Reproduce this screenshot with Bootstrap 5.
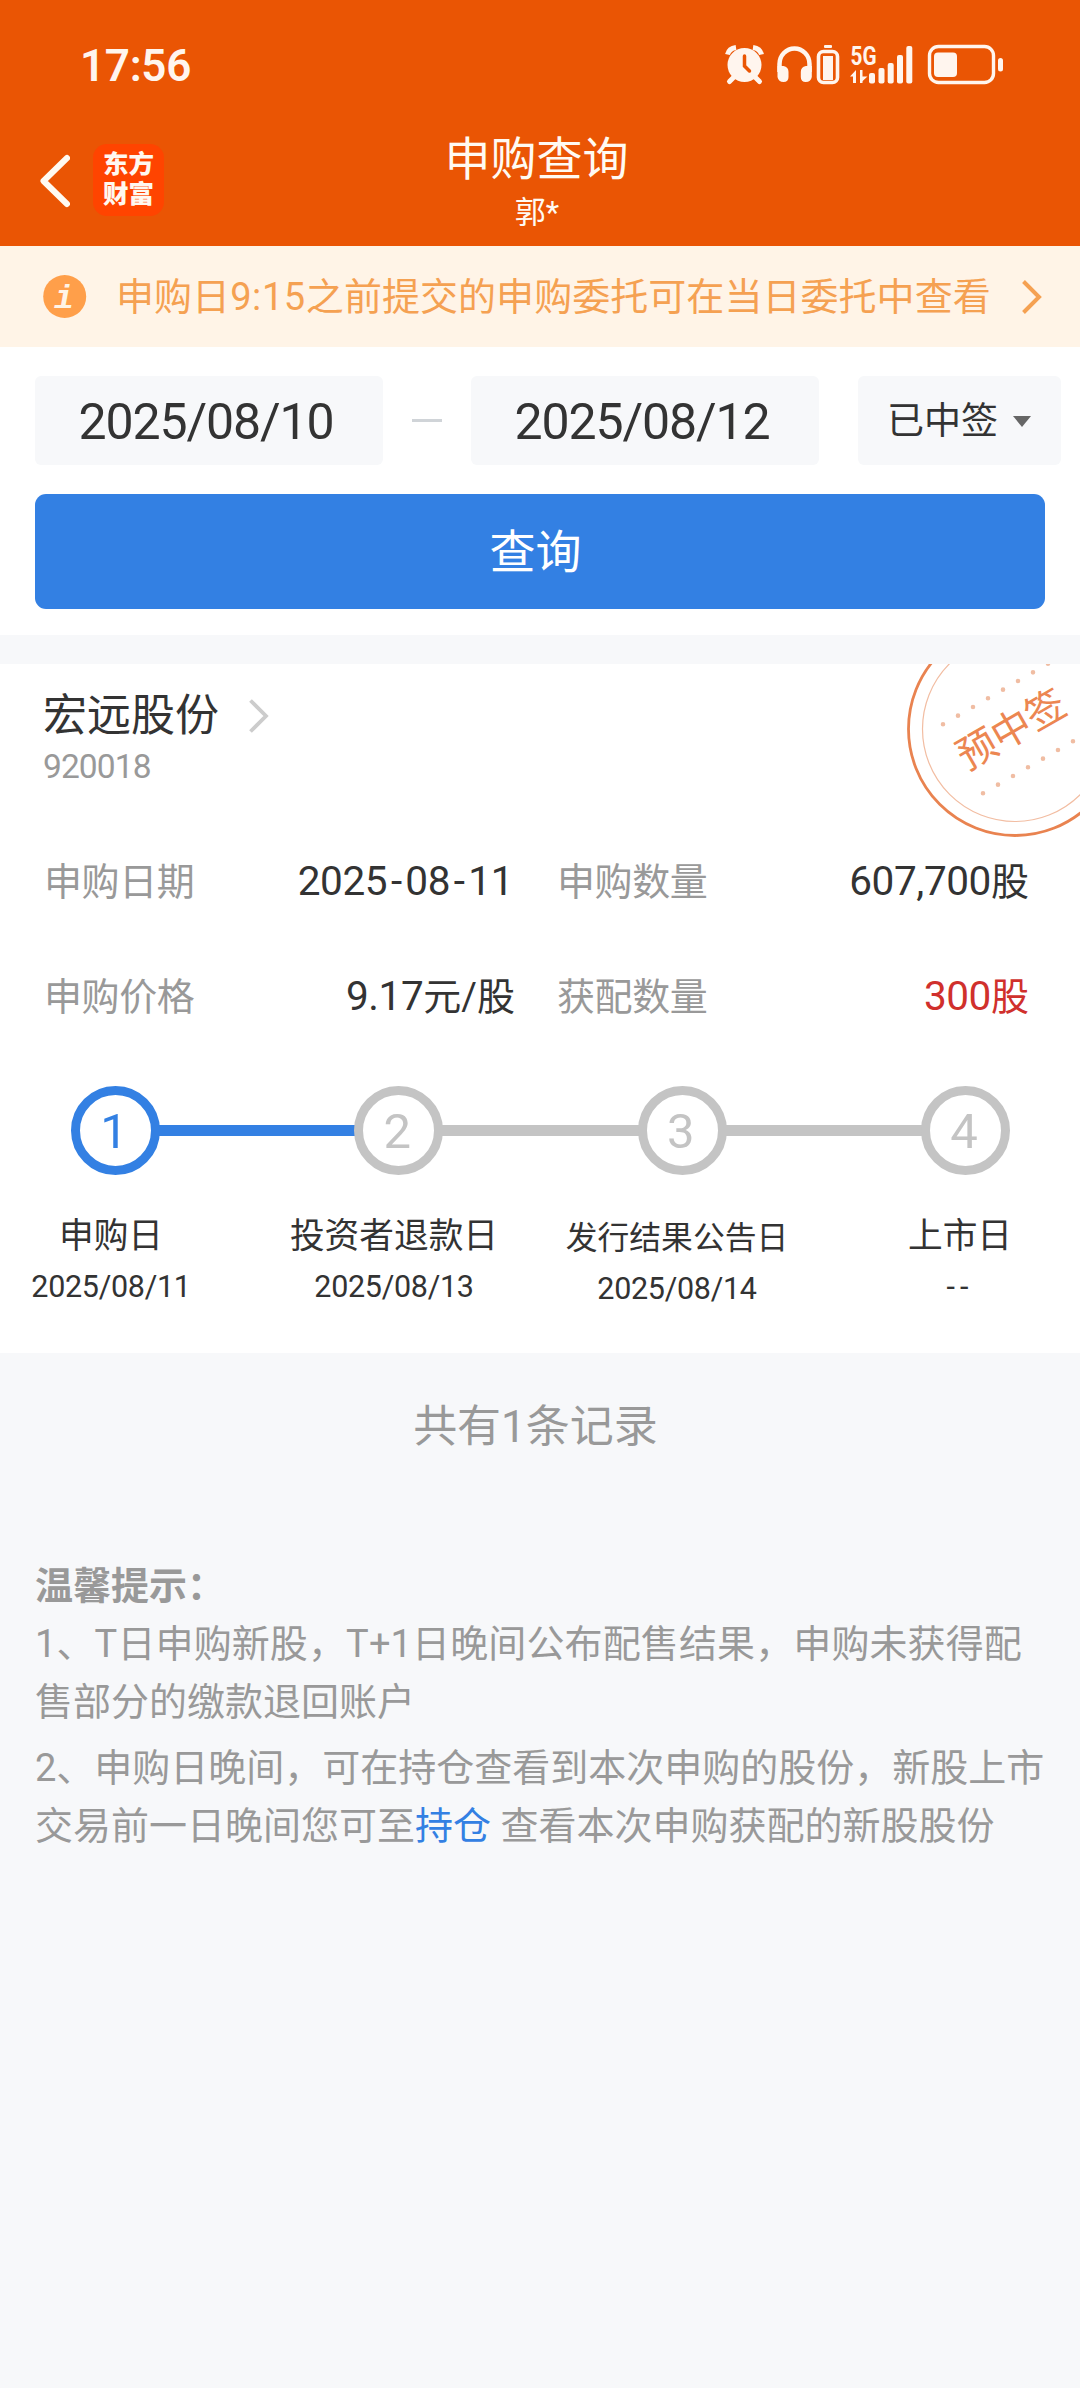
<!DOCTYPE html>
<html lang="zh-CN">
<head>
<meta charset="utf-8">
<meta name="viewport" content="width=device-width, initial-scale=1">
<title>申购查询</title>
<link href="https://cdn.jsdelivr.net/npm/bootstrap@5.3.0/dist/css/bootstrap.min.css" rel="stylesheet">
<style>
  body { background: #f7f8fa; color: #333; font-family: Roboto, "Noto Sans CJK SC", sans-serif; font-size: 38px; line-height: 1; width: 1080px; min-height: 2388px; overflow-x: hidden; }
  svg { display: block; flex: none; }
  .app-head { background: #ea5504; height: 246px; color: #fffaf2; }
  .status { height: 130px; padding: 0 76px 0 80px; }
  .clock { font-size: 44px; font-weight: 600; letter-spacing: -.3px; color: #fff5ee; padding-top: 2px; }
  .titlebar { height: 116px; padding: 0 40px; }
  .side { width: 250px; gap: 23px; padding-top: 14px; }
  .back { margin-top: 10px; }
  .applogo { width: 71px; height: 72px; border-radius: 14px; background: #ff4400; font-size: 25.5px; line-height: 30px; font-weight: 900; color: #fff8f0; padding-top: 5px; }
  .page-title { font-size: 46px; line-height: 58px; margin-right: 7px; }
  .page-user { font-size: 31px; line-height: 50px; margin-right: 6px; }
  .notice { background: #fff4e7; color: #f5a152; height: 101px; padding: 0 38px 0 43px; }
  .notice-text { margin-left: 29px; width: 907px; white-space: nowrap; padding-top: 1px; letter-spacing: .05px; }
  .notice-text span { letter-spacing: .6px; }
  .filters { padding: 29px 0 26px 35px; }
  .datebox { width: 348px; height: 89px; border-radius: 6px; background: #f7f8fa; font-size: 50px; letter-spacing: -1.1px; padding: 2px 6px 0 0; }
  .dash { width: 30px; height: 3px; background: #d0d4d8; margin: 0 29px; }
  .pick { width: 203px; height: 89px; border-radius: 6px; background: #f7f8fa; margin-left: 39px; font-size: 37px; gap: 15px; padding: 1px 0 0 29px; }
  .caret { border: 9px solid transparent; border-top: 11px solid #666; border-bottom: 0; }
  .btn-query { --bs-btn-bg: #3380e3; --bs-btn-hover-bg: #2a73d2; --bs-btn-color: #fff; --bs-btn-hover-color: #fff; width: 1010px; height: 115px; border: 0; border-radius: 11px; font-size: 46px; margin-top: 29px; padding-right: 21px; padding-top: 8px; }
  .record { margin-top: 29px; height: 689px; overflow: hidden; }
  .seal { right: 0; top: 0; }
  .rec-head { padding: 24px 44px 0 43px; }
  .rec-name { font-size: 44px; line-height: 56px; gap: 30px; }
  .rec-code { font-size: 33.5px; line-height: 46px; color: #999; letter-spacing: -.9px; }
  .facts { padding: 34px 51px 0 44px; }
  .fact { height: 115px; width: 471px; }
  .fact + .fact { width: 472px; margin-left: 42px; }
  .fact span { color: #999; letter-spacing: -.4px; }
  .num { font-size: 40.5px; letter-spacing: -.4px; }
  .num-date { margin-right: 2px; }
  .hy { margin: 0 3.7px; }
  .hit { color: #d0302c; }
  .steps { padding: 32px 70px 0 71px; }
  .dot { width: 89px; height: 89px; flex: none; border: 9px solid #c4c4c4; border-radius: 50%; background: #fff; color: #c4c4c4; font-size: 49px; padding: 2px 3px 0 0; }
  .dot.on { border-color: #3380e3; color: #3380e3; }
  .seg { flex: 1; height: 11px; margin: 0 -2px; background: #c4c4c4; }
  .seg.on { background: #3380e3; }
  .labels { margin: 34px -26px 0; }
  .labels > div { width: 283px; flex: none; padding-right: 9px; text-align: center; white-space: nowrap; font-size: 34.7px; line-height: 54px; }
  .labels small { display: block; font-size: 30.5px; line-height: 47px; letter-spacing: -.3px; }
  .labels .tight { font-size: 31.8px; padding-top: 2px; }
  .labels .none-yet { letter-spacing: 5px; }
  .total { color: #999; font-size: 44px; line-height: 60px; margin: 44px 9px 0 0; }
  .tips { color: #999; padding: 100px 0 0 35px; line-height: 58px; white-space: nowrap; }
  .tips p { margin: 0 0 8px; }
  .tips a { color: #3380e3; text-decoration: none; }
  .wide { letter-spacing: .12px; }
</style>
<script src="https://cdn.jsdelivr.net/npm/bootstrap@5.3.0/dist/js/bootstrap.bundle.min.js"></script>
</head>
<body>
<header class="app-head">
  <div class="status d-flex align-items-center justify-content-between">
    <div class="clock">17:56</div>
    <svg width="280" height="44" viewBox="724 43 280 44" fill="#fff5ee" stroke="none">
      <!-- alarm -->
      <circle cx="744.5" cy="65" r="17"/>
      <g fill="none" stroke="#fff5ee" stroke-width="5"><path d="M727.5 54.5Q729 48.500 736 47.500M761.500 54.500Q760 48.500 753 47.500"/><path d="M734 77l-4.500 4.500M755 77l4.500 4.500" stroke-linecap="round"/></g>
      <path d="M744.500 56v10l5 5" fill="none" stroke="#ea5504" stroke-width="3.500" stroke-linecap="round"/>
      <!-- headphones -->
      <path d="M779.500 72v-8a15 15.500 0 0 1 30 0v8" fill="none" stroke="#fff5ee" stroke-width="4.500"/>
      <path d="M777.500 66h6q5 1 5 6v5q0 5-5 5t-6-5zM811.800 66h-6q-5 1-5 6v5q0 5 5 5t6-5z"/>
      <!-- accessory battery -->
      <rect x="824" y="45" width="8" height="3" rx="1"/>
      <rect x="818.500" y="51.500" width="19" height="31" rx="5" fill="none" stroke="#fff5ee" stroke-width="3.600"/>
      <rect x="823" y="56" width="10" height="24"/>
      <!-- signal -->
      <text x="850.500" y="64.500" font-family="Roboto" font-weight="700" font-size="25" textLength="26" lengthAdjust="spacingAndGlyphs">5G</text>
      <path d="M850 76.500l6-6.500v13h-3v-6.500zM860.500 70v6.500h7l-7 6.500z" /><path d="M860 70h2.500v13H860z"/>
      <rect x="869" y="73" width="6" height="10.500" rx="2"/><rect x="878.500" y="68" width="6" height="15.500" rx="2"/><rect x="887.700" y="63" width="6" height="20.500" rx="2"/><rect x="897" y="55" width="6" height="28.500" rx="2"/><rect x="906.300" y="46" width="6" height="37.500" rx="2"/>
      <!-- phone battery -->
      <rect x="929.500" y="46.500" width="64" height="36" rx="9" fill="none" stroke="#fff5ee" stroke-width="3.400"/>
      <rect x="934" y="52.500" width="23" height="24.500" rx="4"/>
      <rect x="998" y="58" width="5" height="13.500" rx="2.500"/>
    </svg>
  </div>
  <div class="titlebar d-flex justify-content-between">
    <div class="side d-flex align-items-start">
      <svg class="back" width="30" height="54" viewBox="0 0 30 54"><path d="M27 4L3.500 27 27 50" fill="none" stroke="#fffaf2" stroke-width="6" stroke-linecap="round" stroke-linejoin="round"/></svg>
      <div class="applogo text-center">东方<br>财富</div>
    </div>
    <div class="text-center">
      <div class="page-title">申购查询</div>
      <div class="page-user">郭*</div>
    </div>
    <div class="side"></div>
  </div>
</header>

<div class="notice d-flex align-items-center">
  <svg width="44" height="44" viewBox="0 0 44 44"><circle cx="21.700" cy="21.500" r="21.500" fill="#ff9f4a"/><text x="21" y="33" text-anchor="middle" font-family="Liberation Mono" font-weight="700" font-style="italic" font-size="33" fill="#fff4e7">i</text></svg>
  <div class="notice-text">申购日<span>9:15</span>之前提交的申购委托可在当日委托中查看</div>
  <svg width="20" height="34" viewBox="0 0 20 34"><path d="M1.500 1.500L17 17 1.500 32.500" fill="none" stroke="#f5a152" stroke-width="4"/></svg>
</div>

<section class="filters bg-white">
  <div class="d-flex align-items-center">
    <div class="datebox d-flex align-items-center justify-content-center">2025/08/10</div>
    <div class="dash"></div>
    <div class="datebox d-flex align-items-center justify-content-center">2025/08/12</div>
    <div class="pick d-flex align-items-center">已中签<i class="caret"></i></div>
  </div>
  <button class="btn btn-query" type="button">查询</button>
</section>

<section class="record bg-white position-relative">
  <svg class="seal position-absolute" width="176" height="176" viewBox="904 664 176 176">
    <circle cx="1015" cy="729" r="106.500" fill="none" stroke="#e98350" stroke-width="2.800"/>
    <circle cx="1015" cy="729" r="92.500" fill="none" stroke="#f2bda2" stroke-width="1.200"/>
    <g fill="none" stroke="#f0bda3" stroke-width="4.600" stroke-linecap="round" stroke-dasharray="0 17.320"><path d="M943 724.300L1049 663.100"/><path d="M983 793.300L1074 740.700"/></g>
    <text transform="translate(1011 729) rotate(-30)" y="14.500" text-anchor="middle" font-size="39.500" fill="#ec8651">预中签</text>
  </svg>
  <div class="rec-head">
    <div class="rec-name d-flex align-items-center">宏远股份
      <svg width="20" height="34" viewBox="0 0 20 34"><path d="M1.500 1.500L17 17 1.500 32.500" fill="none" stroke="#ccc" stroke-width="3.800"/></svg>
    </div>
    <div class="rec-code">920018</div>
  </div>
  <div class="facts">
    <div class="d-flex">
      <div class="fact d-flex align-items-center justify-content-between"><span>申购日期</span><div class="num num-date">2025<b class="hy fw-normal">-</b>08<b class="hy fw-normal">-</b>11</div></div>
      <div class="fact d-flex align-items-center justify-content-between"><span>申购数量</span><div><b class="num fw-normal">607,700</b>股</div></div>
    </div>
    <div class="d-flex">
      <div class="fact d-flex align-items-center justify-content-between"><span>申购价格</span><div><b class="num fw-normal">9.17</b>元/股</div></div>
      <div class="fact d-flex align-items-center justify-content-between"><span>获配数量</span><div class="hit"><b class="num fw-normal">300</b>股</div></div>
    </div>
  </div>
  <div class="steps d-flex align-items-center">
    <div class="dot on d-flex align-items-center justify-content-center">1</div>
    <div class="seg on"></div>
    <div class="dot d-flex align-items-center justify-content-center">2</div>
    <div class="seg"></div>
    <div class="dot d-flex align-items-center justify-content-center">3</div>
    <div class="seg"></div>
    <div class="dot d-flex align-items-center justify-content-center">4</div>
  </div>
  <div class="labels d-flex">
    <div>申购日<small>2025/08/11</small></div>
    <div>投资者退款日<small>2025/08/13</small></div>
    <div class="tight">发行结果公告日<small>2025/08/14</small></div>
    <div>上市日<small class="none-yet">--</small></div>
  </div>
</section>

<div class="total text-center">共有1条记录</div>

<section class="tips">
  <div class="fw-bold">温馨提示：</div>
  <p><span class="wide">1、T日申购新股，T+1日晚间公布配售结果，申购未获得配</span><br>售部分的缴款退回账户</p>
  <p>2、申购日晚间，可在持仓查看到本次申购的股份，新股上市<br>交易前一日晚间您可至<a href="#">持仓</a> 查看本次申购获配的新股股份</p>
</section>
</body>
</html>
